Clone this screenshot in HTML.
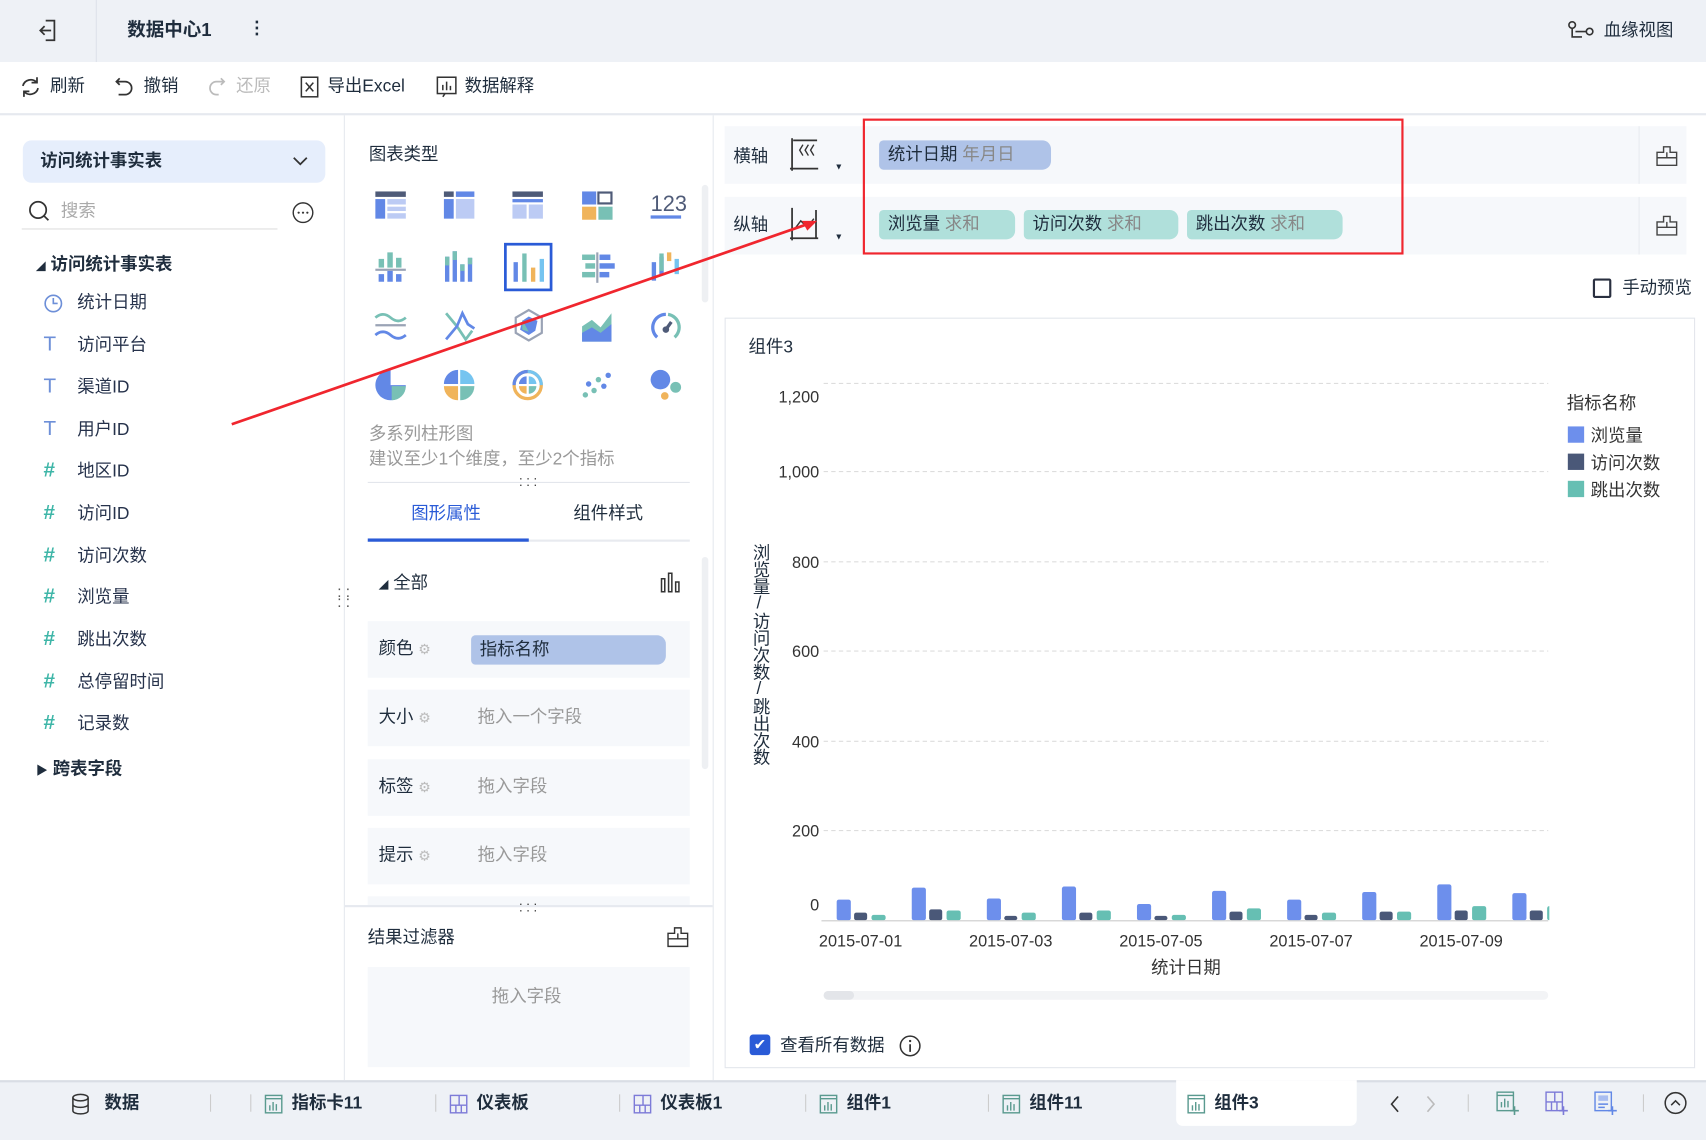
<!DOCTYPE html>
<html><head><meta charset="utf-8"><style>
*{margin:0;padding:0;box-sizing:border-box}
html,body{width:1706px;height:1140px;overflow:hidden;background:#fff}
#r{position:absolute;left:0;top:0;width:1568px;height:1048px;transform:scale(1.08801,1.0878);transform-origin:0 0;font-family:"Liberation Sans","Noto Sans CJK SC",sans-serif;color:#1f2d3d;font-size:16px;line-height:1.1}
.a{position:absolute}
.t{position:absolute;white-space:nowrap}
.g{color:#999}
.fi{position:absolute;left:40px;font-size:16px;color:#26324b}
.fi b{display:inline-block;width:31px;font-weight:bold;color:#3fb6a8;font-size:19px}
.fi i{display:inline-block;width:31px;font-style:normal;color:#6d8fd8;font-size:19px}
.row{position:absolute;left:338px;width:296px;height:52px;background:#f6f8fb}
.row .l{position:absolute;left:10px;top:17px}
.row .p{position:absolute;left:101px;top:17px;color:#999}
.tab{position:absolute;top:1006px;font-weight:bold;font-size:16px;color:#1f2d3d}
.pill{position:absolute;height:27px;border-radius:4px 8px 8px 4px;padding:5px 8px;font-size:16px}
</style></head><body><div id="r">
<!-- header -->
<div class="a" style="left:0;top:0;width:1568px;height:57px;background:#eef1f6"></div>
<div class="a" style="left:88px;top:0;width:1px;height:57px;background:#dde2ea"></div>
<svg class="a" style="left:34px;top:17px" width="20" height="22" viewBox="0 0 20 22"><path d="M8 2h8v18h-8M3 11h10M7 7l-4 4 4 4" fill="none" stroke="#333" stroke-width="1.6"/></svg>
<div class="t" style="left:117px;top:19px;font-weight:bold;font-size:17px">数据中心1</div>
<div class="t" style="left:228px;top:18px;font-weight:bold">⋮</div>
<svg class="a" style="left:1441px;top:19px" width="24" height="18"><circle cx="4" cy="4" r="3" fill="none" stroke="#333" stroke-width="1.5"/><circle cx="20" cy="10" r="3" fill="none" stroke="#333" stroke-width="1.5"/><path d="M4 7v8h9M7 10h10" stroke="#333" stroke-width="1.5" fill="none"/></svg>
<div class="t" style="left:1474px;top:20px">血缘视图</div>
<!-- toolbar -->
<div class="a" style="left:0;top:104px;width:1568px;height:2px;background:#e6e9ef"></div>
<svg class="a" style="left:18px;top:70px" width="20" height="20"><path d="M16 6a7.5 7.5 0 0 0-13 3M4 14a7.5 7.5 0 0 0 13-3M16 1v5h-5M4 19v-5h5" fill="none" stroke="#333" stroke-width="1.6"/></svg>
<div class="t" style="left:46px;top:71px">刷新</div>
<svg class="a" style="left:105px;top:70px" width="18" height="20"><path d="M5 2L2 5l3 3M2 5h8a6 6 0 0 1 0 12H4" fill="none" stroke="#333" stroke-width="1.6"/></svg>
<div class="t" style="left:132px;top:71px">撤销</div>
<svg class="a" style="left:190px;top:70px" width="18" height="20"><path d="M13 2l3 3-3 3M16 5H9a6 6 0 0 0 0 12h2" fill="none" stroke="#bbb" stroke-width="1.6"/></svg>
<div class="t" style="left:217px;top:71px;color:#bbb">还原</div>
<svg class="a" style="left:276px;top:70px" width="17" height="20"><rect x="1" y="1" width="15" height="18" fill="none" stroke="#333" stroke-width="1.4"/><path d="M5 6l7 8M12 6l-7 8" stroke="#333" stroke-width="1.4"/></svg>
<div class="t" style="left:301px;top:71px">导出Excel</div>
<svg class="a" style="left:401px;top:70px" width="19" height="20"><rect x="1" y="1" width="17" height="15" fill="none" stroke="#333" stroke-width="1.4"/><path d="M6 13V8M9.5 13V5M13 13V9M8 16l-2 3" stroke="#333" stroke-width="1.4"/></svg>
<div class="t" style="left:427px;top:71px">数据解释</div>
<!-- left panel -->
<div class="a" style="left:316px;top:106px;width:1px;height:887px;background:#e6e9ef"></div>
<div class="a" style="left:21px;top:129px;width:278px;height:39px;background:#e6eefc;border-radius:8px"></div>
<div class="t" style="left:37px;top:140px;font-weight:bold">访问统计事实表</div>
<svg class="a" style="left:268px;top:142px" width="16" height="12"><path d="M2 3l6 6 6-6" fill="none" stroke="#333" stroke-width="1.6"/></svg>
<svg class="a" style="left:25px;top:183px" width="22" height="22"><circle cx="10" cy="10" r="7.5" fill="none" stroke="#333" stroke-width="1.6"/><path d="M15.5 15.5l4 4" stroke="#333" stroke-width="1.6"/></svg>
<div class="t g" style="left:56px;top:186px;color:#aaa">搜索</div>
<div class="a" style="left:20px;top:210px;width:235px;height:1px;background:#ddd"></div>
<svg class="a" style="left:268px;top:185px" width="21" height="21"><circle cx="10.5" cy="10.5" r="9" fill="none" stroke="#333" stroke-width="1.3"/><circle cx="6.5" cy="10.5" r="1" fill="#333"/><circle cx="10.5" cy="10.5" r="1" fill="#333"/><circle cx="14.5" cy="10.5" r="1" fill="#333"/></svg>
<div class="t" style="left:33px;top:235px;font-weight:bold"><span style="font-size:9px">◢</span> 访问统计事实表</div>
<svg class="a" style="left:40px;top:270px" width="18" height="18"><circle cx="9" cy="9" r="7.5" fill="none" stroke="#6d8fd8" stroke-width="1.5"/><path d="M9 4v5h4" fill="none" stroke="#6d8fd8" stroke-width="1.5"/></svg>
<div class="fi" style="top:270px;left:71px">统计日期</div>
<div class="fi" style="top:307px"><i>T</i>访问平台</div>
<div class="fi" style="top:346px"><i>T</i>渠道ID</div>
<div class="fi" style="top:385px"><i>T</i>用户ID</div>
<div class="fi" style="top:423px"><b>#</b>地区ID</div>
<div class="fi" style="top:462px"><b>#</b>访问ID</div>
<div class="fi" style="top:501px"><b>#</b>访问次数</div>
<div class="fi" style="top:539px"><b>#</b>浏览量</div>
<div class="fi" style="top:578px"><b>#</b>跳出次数</div>
<div class="fi" style="top:617px"><b>#</b>总停留时间</div>
<div class="fi" style="top:655px"><b>#</b>记录数</div>
<div class="t" style="left:33px;top:699px;font-weight:bold"><span style="font-size:11px">▶</span> 跨表字段</div>
<div class="t" style="left:310px;top:540px;color:#555;font-size:14px;line-height:9px">: :<br>: :</div>
<!-- middle -->
<div class="a" style="left:655px;top:106px;width:1px;height:887px;background:#e6e9ef"></div>
<div class="t" style="left:339px;top:134px">图表类型</div>
<div class="a" style="left:645px;top:170px;width:6px;height:108px;background:#eef0f3;border-radius:3px"></div>
<svg class="a" style="left:340px;top:170px" width="295" height="205">
<g transform="translate(5,6)"><rect width="28" height="5" fill="#4f5b78"/><rect y="7" width="9" height="18" fill="#6288e6"/><rect x="11" y="7" width="17" height="5" fill="#bccbf4"/><rect x="11" y="14" width="17" height="4" fill="#bccbf4"/><rect x="11" y="20" width="17" height="5" fill="#bccbf4"/></g>
<g transform="translate(68,6)"><rect width="9" height="5" fill="#4f5b78"/><rect x="11" width="17" height="5" fill="#6288e6"/><rect y="7" width="9" height="18" fill="#6288e6"/><rect x="11" y="7" width="17" height="18" fill="#bccbf4"/></g>
<g transform="translate(131,6)"><rect width="28" height="5" fill="#4f5b78"/><rect y="7" width="28" height="3" fill="#6288e6"/><rect y="12" width="13" height="13" fill="#bccbf4"/><rect x="15" y="12" width="13" height="13" fill="#bccbf4"/></g>
<g transform="translate(195,6)"><rect width="13" height="12" fill="#6288e6"/><rect x="15" y="1" width="12" height="10" fill="none" stroke="#4f5b78" stroke-width="2"/><rect y="14" width="13" height="12" fill="#f0b45b"/><rect x="15" y="14" width="13" height="12" fill="#78c0b5"/></g>
<text x="258" y="24" font-size="20" fill="#4f5b78" font-family="Liberation Sans">123</text><rect x="258" y="28" width="28" height="3" fill="#6288e6"/>
<g transform="translate(5,60)"><rect x="3" y="8" width="5" height="8" fill="#78c0b5"/><rect x="11" y="2" width="5" height="14" fill="#78c0b5"/><rect x="19" y="7" width="5" height="9" fill="#78c0b5"/><rect y="17" width="28" height="2" fill="#9aa3b5"/><rect x="3" y="22" width="5" height="7" fill="#6288e6"/><rect x="11" y="19" width="5" height="10" fill="#6288e6"/><rect x="19" y="22" width="5" height="7" fill="#6288e6"/></g>
<g transform="translate(68,60)"><rect x="1" y="6" width="4" height="23" fill="#6288e6"/><rect x="1" y="6" width="4" height="8" fill="#78c0b5"/><rect x="8" y="1" width="4" height="28" fill="#6288e6"/><rect x="8" y="1" width="4" height="8" fill="#78c0b5"/><rect x="15" y="13" width="4" height="16" fill="#6288e6"/><rect x="15" y="13" width="4" height="6" fill="#78c0b5"/><rect x="22" y="7" width="4" height="22" fill="#6288e6"/><rect x="22" y="7" width="4" height="6" fill="#78c0b5"/></g>
<rect x="124.5" y="54.5" width="42" height="42" fill="none" stroke="#2a5bd7" stroke-width="2.5"/>
<g transform="translate(131,61)"><rect x="1" y="10" width="4" height="18" fill="#6288e6"/><rect x="9" y="2" width="4" height="26" fill="#78c0b5"/><rect x="17" y="15" width="4" height="13" fill="#f0b45b"/><rect x="25" y="7" width="4" height="21" fill="#75c4f0"/></g>
<g transform="translate(195,62)"><rect x="0" y="2" width="12" height="5" fill="#78c0b5"/><rect x="16" y="2" width="10" height="5" fill="#6288e6"/><rect x="3" y="10" width="9" height="5" fill="#78c0b5"/><rect x="16" y="10" width="14" height="5" fill="#6288e6"/><rect x="0" y="18" width="12" height="5" fill="#78c0b5"/><rect x="16" y="18" width="9" height="5" fill="#6288e6"/><rect x="13" y="0" width="2" height="28" fill="#9aa3b5"/></g>
<g transform="translate(258,60)"><rect x="1" y="11" width="4" height="17" fill="#6288e6"/><rect x="8" y="6" width="4" height="16" fill="#6288e6"/><rect x="8" y="3" width="4" height="16" fill="#78c0b5"/><rect x="15" y="2" width="4" height="8" fill="#f0b45b"/><rect x="22" y="8" width="4" height="14" fill="#75c4f0"/></g>
<g transform="translate(5,116)" fill="none" stroke-width="2.5"><path d="M0 6q7-6 14 0t14 0" stroke="#78c0b5"/><path d="M0 13h28" stroke="#9aa3b5" stroke-width="2"/><path d="M0 22q7-6 14 0t14 0" stroke="#6288e6"/></g>
<g transform="translate(68,116)" fill="none" stroke-width="2.5"><path d="M2 2l10 12 8 12 6-8" stroke="#78c0b5"/><path d="M2 26l10-12 5-12 5 10 6 4" stroke="#6288e6"/></g>
<g transform="translate(132,114)"><path d="M14 1l12 7v14l-12 7-12-7V8z" fill="none" stroke="#9aa3b5" stroke-width="2"/><path d="M14 7l8 4-2 9-6 4-8-5 2-8z" fill="#6288e6"/><path d="M8 10l6 11-6-2z" fill="#78c0b5"/></g>
<g transform="translate(195,116)"><path d="M0 28V14l9-6 8 7 10-13v26z" fill="#78c0b5"/><path d="M0 28v-8l9-5 8 5 10-8v16z" fill="#6288e6"/></g>
<g transform="translate(258,116)" fill="none" stroke-width="3"><path d="M6 24a12 12 0 0 1 8-21" stroke="#6288e6"/><path d="M16 3a12 12 0 0 1 6 21" stroke="#78c0b5"/><circle cx="14" cy="17" r="3" fill="#4f5b78" stroke="none"/><path d="M14 17l5-7" stroke="#4f5b78"/></g>
<g transform="translate(5,170)"><path d="M14 14V0a14 14 0 1 0 14 14z" fill="#6288e6"/><path d="M15 15h13a13 13 0 0 1-13 13z" fill="#78c0b5"/></g>
<g transform="translate(68,170)"><path d="M13 0v13H0A13 13 0 0 1 13 0" fill="#6288e6"/><path d="M15 0a13 13 0 0 1 13 13H15z" fill="#75c4f0"/><path d="M13 15v13A13 13 0 0 1 0 15z" fill="#f0b45b"/><path d="M15 15h13a13 13 0 0 1-13 13z" fill="#78c0b5"/></g>
<g transform="translate(131,170)"><circle cx="14" cy="14" r="12.5" fill="none" stroke="#f0b45b" stroke-width="3"/><path d="M14 1.5a12.5 12.5 0 0 1 12.5 12.5" fill="none" stroke="#75c4f0" stroke-width="3"/><path d="M1.5 14A12.5 12.5 0 0 1 14 1.5" fill="none" stroke="#6288e6" stroke-width="3"/><path d="M13 6v7H6a7 7 0 0 1 7-7" fill="#6288e6"/><path d="M15 6a7 7 0 0 1 7 7h-7z" fill="#75c4f0"/><path d="M13 15v7a7 7 0 0 1-7-7z" fill="#f0b45b"/><path d="M15 15h7a7 7 0 0 1-7 7z" fill="#78c0b5"/></g>
<g transform="translate(195,172)"><circle cx="24" cy="3" r="2.5" fill="#6288e6"/><circle cx="15" cy="7" r="2.5" fill="#78c0b5"/><circle cx="6" cy="11" r="2.5" fill="#6288e6"/><circle cx="20" cy="13" r="2.5" fill="#6288e6"/><circle cx="11" cy="17" r="2.5" fill="#78c0b5"/><circle cx="3" cy="21" r="2.5" fill="#78c0b5"/></g>
<g transform="translate(258,170)"><circle cx="9" cy="9" r="9" fill="#6288e6"/><circle cx="23" cy="16" r="5" fill="#78c0b5"/><circle cx="13" cy="24" r="3.5" fill="#f0b45b"/></g>
</svg>
<div class="t" style="left:339px;top:391px;color:#999">多系列柱形图</div>
<div class="t" style="left:339px;top:414px;color:#999">建议至少1个维度，至少2个指标</div>
<div class="t" style="left:477px;top:434px;color:#333;font-size:12px;line-height:6px">. . .<br>. . .</div>
<div class="a" style="left:338px;top:443px;width:296px;height:1px;background:#e3e6ec"></div>
<div class="t" style="left:378px;top:464px;color:#2a5bd7">图形属性</div>
<div class="t" style="left:527px;top:464px">组件样式</div>
<div class="a" style="left:338px;top:496px;width:296px;height:2px;background:#e8eaef"></div>
<div class="a" style="left:338px;top:495px;width:148px;height:3px;background:#2a5bd7"></div>
<div class="a" style="left:645px;top:512px;width:6px;height:195px;background:#eef0f3;border-radius:3px"></div>
<div class="t" style="left:348px;top:528px"><span style="font-size:9px">◢</span> 全部</div>
<svg class="a" style="left:606px;top:526px" width="20" height="19"><path d="M2 18V6h3v12zM8.5 18V1h3v17zM15 18v-9h3v9z" fill="none" stroke="#333" stroke-width="1.4"/></svg>
<div class="row" style="top:571px"><span class="l">颜色 <span style="color:#bbb;font-size:13px">⚙</span></span><div class="a" style="left:95px;top:13px;width:179px;height:27px;background:#afc3e8;border-radius:4px 8px 8px 4px"></div><span class="t" style="left:103px;top:18px">指标名称</span></div>
<div class="row" style="top:634px"><span class="l">大小 <span style="color:#bbb;font-size:13px">⚙</span></span><span class="p">拖入一个字段</span></div>
<div class="row" style="top:698px"><span class="l">标签 <span style="color:#bbb;font-size:13px">⚙</span></span><span class="p">拖入字段</span></div>
<div class="row" style="top:761px"><span class="l">提示 <span style="color:#bbb;font-size:13px">⚙</span></span><span class="p">拖入字段</span></div>
<div class="row" style="top:824px;height:8px"></div>
<div class="a" style="left:317px;top:832px;width:338px;height:2px;background:#e6e9ef"></div>
<div class="t" style="left:477px;top:825px;color:#333;font-size:12px;line-height:6px">. . .<br>. . .</div>
<div class="t" style="left:338px;top:854px">结果过滤器</div>
<svg class="a" style="left:613px;top:852px" width="20" height="20"><path d="M7 1h6v5h6v12H1V6h6zM1 11h18M10 6v5" fill="none" stroke="#333" stroke-width="1.3"/></svg>
<div class="a" style="left:338px;top:889px;width:296px;height:92px;background:#f6f8fb"></div>
<div class="t" style="left:452px;top:908px;color:#999">拖入字段</div>
<!-- right -->
<div class="a" style="left:666px;top:116px;width:884px;height:53px;background:#f6f8fb"></div>
<div class="a" style="left:666px;top:181px;width:884px;height:53px;background:#f6f8fb"></div>
<div class="a" style="left:1506px;top:116px;width:1px;height:53px;background:#e8ebf0"></div>
<div class="a" style="left:1506px;top:181px;width:1px;height:53px;background:#e8ebf0"></div>
<div class="t" style="left:674px;top:136px">横轴</div>
<div class="t" style="left:674px;top:199px">纵轴</div>
<svg class="a" style="left:726px;top:127px" width="28" height="32"><path d="M2 0v30M0 28h26M3 2h22" stroke="#333" stroke-width="1.6" fill="none"/><path d="M12 6l-3 5 3 5M17 6l-3 5 3 5M22 6l-3 5 3 5" stroke="#333" stroke-width="1.3" fill="none"/></svg>
<svg class="a" style="left:726px;top:191px" width="28" height="32"><path d="M2 0v30M0 28h26M24 2v26" stroke="#333" stroke-width="1.6" fill="none"/><path d="M4 20l6-8 6 6 6-8" stroke="#333" stroke-width="1.3" fill="none"/></svg>
<div class="t" style="left:767px;top:150px;font-size:8px">▼</div>
<div class="t" style="left:767px;top:214px;font-size:8px">▼</div>
<div class="pill" style="left:808px;top:129px;width:158px;background:#afc3e8">统计日期 <span style="color:#888">年月日</span></div>
<div class="pill" style="left:808px;top:193px;width:125px;background:#b0e0db">浏览量 <span style="color:#888">求和</span></div>
<div class="pill" style="left:941px;top:193px;width:142px;background:#b0e0db">访问次数 <span style="color:#888">求和</span></div>
<div class="pill" style="left:1091px;top:193px;width:143px;background:#b0e0db">跳出次数 <span style="color:#888">求和</span></div>
<svg class="a" style="left:1522px;top:134px" width="20" height="20"><path d="M7 1h6v5h6v12H1V6h6zM1 11h18M10 6v5" fill="none" stroke="#444" stroke-width="1.3"/></svg>
<svg class="a" style="left:1522px;top:198px" width="20" height="20"><path d="M7 1h6v5h6v12H1V6h6zM1 11h18M10 6v5" fill="none" stroke="#444" stroke-width="1.3"/></svg>
<div class="a" style="left:793px;top:109px;width:497px;height:125px;border:2.5px solid #f0262e"></div>
<div class="a" style="left:1464px;top:256px;width:17px;height:18px;border:2px solid #2a3040;border-radius:2px"></div>
<div class="t" style="left:1491px;top:257px">手动预览</div>
<div class="a" style="left:666px;top:292px;width:892px;height:690px;border:1px solid #e3e6ec"></div>
<div class="t" style="left:688px;top:311px">组件3</div>
<svg class="a" style="left:680px;top:340px" width="880" height="590" font-family="Liberation Sans" font-size="15" fill="#333">
<g stroke="#ddd" stroke-dasharray="4 3"><path d="M77 12.5h666M77 93.5h666M77 176.5h666M77 258.5h666M77 341.5h666M77 423.5h666"/></g>
<path d="M75 506.5h668" stroke="#ccc"/>
<g text-anchor="end"><text x="73" y="30">1,200</text><text x="73" y="99">1,000</text><text x="73" y="182">800</text><text x="73" y="264">600</text><text x="73" y="347">400</text><text x="73" y="429">200</text><text x="73" y="497">0</text></g>
<g text-anchor="middle"><text x="111" y="530">2015-07-01</text><text x="249" y="530">2015-07-03</text><text x="387" y="530">2015-07-05</text><text x="525" y="530">2015-07-07</text><text x="663" y="530">2015-07-09</text><text x="410" y="555" font-size="16">统计日期</text></g>
<defs><clipPath id="c"><rect x="75" y="0" width="669" height="506"/></clipPath></defs>
<g clip-path="url(#c)">
<g fill="#6d8fec"><rect x="89" y="487" width="13" height="19" rx="2"/><rect x="158" y="476" width="13" height="30" rx="2"/><rect x="227" y="486" width="13" height="20" rx="2"/><rect x="296" y="475" width="13" height="31" rx="2"/><rect x="365" y="491" width="13" height="15" rx="2"/><rect x="434" y="479" width="13" height="27" rx="2"/><rect x="503" y="487" width="13" height="19" rx="2"/><rect x="572" y="480" width="13" height="26" rx="2"/><rect x="641" y="473" width="13" height="33" rx="2"/><rect x="710" y="481" width="13" height="25" rx="2"/></g>
<g fill="#4a5878"><rect x="105" y="499" width="12" height="7" rx="2"/><rect x="174" y="496" width="12" height="10" rx="2"/><rect x="243" y="502" width="12" height="4" rx="2"/><rect x="312" y="499" width="12" height="7" rx="2"/><rect x="381" y="502" width="12" height="4" rx="2"/><rect x="450" y="498" width="12" height="8" rx="2"/><rect x="519" y="501" width="12" height="5" rx="2"/><rect x="588" y="498" width="12" height="8" rx="2"/><rect x="657" y="497" width="12" height="9" rx="2"/><rect x="726" y="497" width="12" height="9" rx="2"/></g>
<g fill="#66bfb3"><rect x="121" y="501" width="13" height="5" rx="2"/><rect x="190" y="497" width="13" height="9" rx="2"/><rect x="259" y="499" width="13" height="7" rx="2"/><rect x="328" y="497" width="13" height="9" rx="2"/><rect x="397" y="501" width="13" height="5" rx="2"/><rect x="466" y="495" width="13" height="11" rx="2"/><rect x="535" y="499" width="13" height="7" rx="2"/><rect x="604" y="498" width="13" height="8" rx="2"/><rect x="673" y="493" width="13" height="13" rx="2"/><rect x="742" y="493" width="13" height="13" rx="2"/></g>
</g>
<rect x="77" y="571" width="666" height="8" rx="4" fill="#f3f4f6"/><rect x="77" y="571" width="28" height="8" rx="4" fill="#e3e5e9"/>
<text x="760" y="36" font-size="16">指标名称</text>
<rect x="761" y="52" width="15" height="15" fill="#6d8fec"/><text x="782" y="66" font-size="16">浏览量</text>
<rect x="761" y="77" width="15" height="15" fill="#4a5878"/><text x="782" y="91" font-size="16">访问次数</text>
<rect x="761" y="102" width="15" height="15" fill="#66bfb3"/><text x="782" y="116" font-size="16">跳出次数</text>
</svg>
<div class="t" style="left:688px;top:500px;writing-mode:vertical-rl;text-orientation:upright;font-size:16px;letter-spacing:-0.5px;line-height:18px">浏览量/访问次数/跳出次数</div>
<div class="a" style="left:689px;top:951px;width:19px;height:19px;background:#2a5bd7;border-radius:3px;color:#fff;font-size:14px;text-align:center;line-height:19px">✔</div>
<div class="t" style="left:717px;top:953px">查看所有数据</div>
<svg class="a" style="left:826px;top:951px" width="21" height="21"><circle cx="10.5" cy="10.5" r="9" fill="none" stroke="#333" stroke-width="1.4"/><path d="M10.5 9v7" stroke="#333" stroke-width="1.6"/><circle cx="10.5" cy="6" r="1.1" fill="#333"/></svg>
<!-- red arrow -->
<svg class="a" style="left:0;top:0" width="1568" height="1048"><path d="M213 390L748 204" stroke="#f0262e" stroke-width="2.5"/><path d="M751 203l-14 0 5 9z" fill="#f0262e"/></svg>
<!-- bottom bar -->
<div class="a" style="left:0;top:993px;width:1568px;height:55px;background:#eef1f6;border-top:2px solid #d9dde5"></div>
<div class="a" style="left:1081px;top:993px;width:166px;height:42px;background:#fff;border-radius:0 0 6px 6px"></div>
<svg class="a" style="left:66px;top:1005px" width="16" height="20"><ellipse cx="8" cy="4" rx="7" ry="3" fill="none" stroke="#333" stroke-width="1.4"/><path d="M1 4v12c0 4 14 4 14 0V4M1 10c0 4 14 4 14 0" fill="none" stroke="#333" stroke-width="1.4"/></svg>
<div class="tab" style="left:96px">数据</div>
<div class="a" style="left:193px;top:1006px;width:1px;height:16px;background:#ccc"></div>
<div class="a" style="left:230px;top:1006px;width:1px;height:16px;background:#ccc"></div>
<svg class="a" style="left:243px;top:1006px" width="17" height="18"><rect x="1" y="1" width="15" height="16" fill="none" stroke="#5a9a8f" stroke-width="1.3"/><path d="M1 4h15M5 15v-5M8 15V7M11 15v-6" stroke="#5a9a8f" stroke-width="1.3"/></svg>
<div class="tab" style="left:268px">指标卡11</div>
<div class="a" style="left:400px;top:1006px;width:1px;height:16px;background:#ccc"></div>
<svg class="a" style="left:413px;top:1006px" width="17" height="18"><rect x="1" y="1" width="15" height="16" fill="none" stroke="#7d7bd8" stroke-width="1.3"/><path d="M9 1v9M1 10h15M6 10v7M11 10v7" stroke="#7d7bd8" stroke-width="1.3"/></svg>
<div class="tab" style="left:438px">仪表板</div>
<div class="a" style="left:569px;top:1006px;width:1px;height:16px;background:#ccc"></div>
<svg class="a" style="left:582px;top:1006px" width="17" height="18"><rect x="1" y="1" width="15" height="16" fill="none" stroke="#7d7bd8" stroke-width="1.3"/><path d="M9 1v9M1 10h15M6 10v7M11 10v7" stroke="#7d7bd8" stroke-width="1.3"/></svg>
<div class="tab" style="left:607px">仪表板1</div>
<div class="a" style="left:740px;top:1006px;width:1px;height:16px;background:#ccc"></div>
<svg class="a" style="left:753px;top:1006px" width="17" height="18"><rect x="1" y="1" width="15" height="16" fill="none" stroke="#5a9a8f" stroke-width="1.3"/><path d="M1 4h15M5 15v-5M8 15V7M11 15v-6" stroke="#5a9a8f" stroke-width="1.3"/></svg>
<div class="tab" style="left:778px">组件1</div>
<div class="a" style="left:908px;top:1006px;width:1px;height:16px;background:#ccc"></div>
<svg class="a" style="left:921px;top:1006px" width="17" height="18"><rect x="1" y="1" width="15" height="16" fill="none" stroke="#5a9a8f" stroke-width="1.3"/><path d="M1 4h15M5 15v-5M8 15V7M11 15v-6" stroke="#5a9a8f" stroke-width="1.3"/></svg>
<div class="tab" style="left:946px">组件11</div>
<svg class="a" style="left:1091px;top:1006px" width="17" height="18"><rect x="1" y="1" width="15" height="16" fill="none" stroke="#5a9a8f" stroke-width="1.3"/><path d="M1 4h15M5 15v-5M8 15V7M11 15v-6" stroke="#5a9a8f" stroke-width="1.3"/></svg>
<div class="tab" style="left:1116px">组件3</div>
<svg class="a" style="left:1274px;top:1006px" width="50" height="18"><path d="M11 2l-6 7 6 7" fill="none" stroke="#333" stroke-width="1.5"/><path d="M38 2l6 7-6 7" fill="none" stroke="#bbb" stroke-width="1.5"/></svg>
<div class="a" style="left:1349px;top:1006px;width:1px;height:16px;background:#ccc"></div>
<svg class="a" style="left:1375px;top:1003px" width="22" height="22"><rect x="1" y="1" width="15" height="17" fill="none" stroke="#5a9a8f" stroke-width="1.3"/><path d="M1 4h15M5 15v-5M8 15V7M11 15v-6" stroke="#5a9a8f" stroke-width="1.3"/><path d="M17 14v8M13 18h8" stroke="#5a9a8f" stroke-width="1.5"/></svg>
<svg class="a" style="left:1420px;top:1003px" width="22" height="22"><rect x="1" y="1" width="15" height="17" fill="none" stroke="#7d7bd8" stroke-width="1.3"/><path d="M9 1v9M1 10h15M6 10v8M11 10v8" stroke="#7d7bd8" stroke-width="1.3"/><path d="M17 14v8M13 18h8" stroke="#7d7bd8" stroke-width="1.5"/></svg>
<svg class="a" style="left:1465px;top:1003px" width="22" height="22"><rect x="1" y="1" width="15" height="17" fill="none" stroke="#6288e6" stroke-width="1.3"/><rect x="4" y="4" width="9" height="5" fill="#a9bdf0"/><path d="M4 12h9M4 15h6" stroke="#6288e6" stroke-width="1.3"/><path d="M17 14v8M13 18h8" stroke="#6288e6" stroke-width="1.5"/></svg>
<div class="a" style="left:1510px;top:1006px;width:1px;height:16px;background:#ccc"></div>
<svg class="a" style="left:1529px;top:1003px" width="22" height="22"><circle cx="11" cy="11" r="9.5" fill="none" stroke="#333" stroke-width="1.4"/><path d="M7 13l4-4 4 4" fill="none" stroke="#333" stroke-width="1.4"/></svg>
</div></body></html>
